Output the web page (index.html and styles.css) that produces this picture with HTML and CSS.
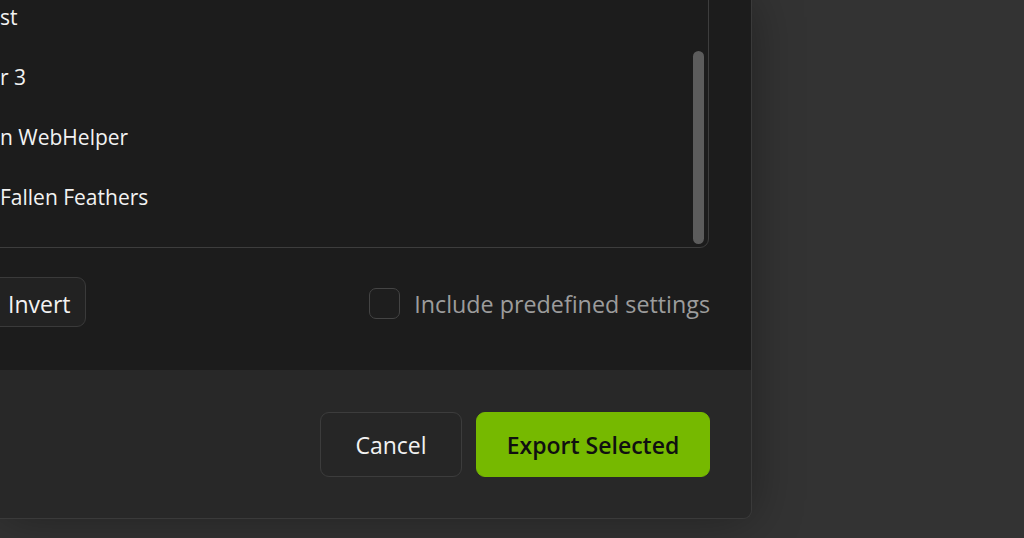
FILE: index.html
```html
<!DOCTYPE html>
<html>
<head>
  <title>Export Settings</title>
  <link rel="stylesheet" href="styles.css">
</head>
<body>
  <div class="dialog">
    <div class="dialog-body">
      <div class="app-list">
        <div class="app-item">st</div>
        <div class="app-item">r 3</div>
        <div class="app-item">n WebHelper</div>
        <div class="app-item">Fallen Feathers</div>
        <div class="scroll-thumb"></div>
      </div>
      <div class="options-row">
        <button class="btn btn-invert">Invert</button>
        <label class="check-option">
          <span class="check-box"></span>
          <span class="check-label">Include predefined settings</span>
        </label>
      </div>
    </div>
    <div class="dialog-footer">
      <button class="btn btn-cancel">Cancel</button>
      <button class="btn btn-primary">Export Selected</button>
    </div>
  </div>
</body>
</html>
```

FILE: styles.css
```css
html, body {
  height: 100%;
}

body {
  margin: 0;
  overflow: hidden;
  background-color: #333333;
  font-family: "Open Sans", "Noto Sans", sans-serif;
  font-weight: 500;
  color: #f2f2f2;
}

.dialog {
  width: 752px;
  height: 519px;
  box-sizing: border-box;
  display: flex;
  flex-direction: column;
  border-right: 1px solid #3a3a3a;
  border-bottom: 1px solid #3a3a3a;
  border-radius: 0 0 9px 0;
  overflow: hidden;
  box-shadow: 0 0 50px rgba(0, 0, 0, 0.35);
}

.dialog-body {
  height: 370px;
  background-color: #1c1c1c;
  padding-right: 42px;
  display: flex;
  flex-direction: column;
}

.app-list {
  position: relative;
  margin: -30px 0 0 -20px;
  padding: 16px 0 20px 20px;
  border: 1px solid #3d3d3d;
  border-radius: 9px;
}

.app-item {
  height: 60px;
  line-height: 60px;
  font-size: 21px;
  white-space: nowrap;
  margin-left: -1px;
}

.scroll-thumb {
  position: absolute;
  right: 4px;
  top: 80px;
  width: 11px;
  height: 193px;
  border-radius: 6px;
  background-color: #5c5c5c;
}

.options-row {
  margin-top: 29px;
  display: flex;
  align-items: center;
  justify-content: space-between;
}

.btn {
  font-family: inherit;
  font-weight: 500;
  font-size: 23px;
  padding-top: 3px;
  border-radius: 9px;
  cursor: pointer;
}

.btn-invert {
  margin-left: -30px;
  height: 50px;
  padding: 3px 14px 0 37px;
  background-color: #222222;
  border: 1px solid #3a3a3a;
  color: #f2f2f2;
}

.check-option {
  display: flex;
  align-items: center;
  gap: 14px;
  margin-right: -1px;
}

.check-box {
  width: 29px;
  height: 29px;
  margin-top: 2px;
  border: 1.5px solid #444444;
  border-radius: 7px;
  background-color: #1e1e1e;
}

.check-label {
  font-size: 23.3px;
  padding-top: 3px;
  color: #9c9c9c;
}

.dialog-footer {
  flex: 1;
  background-color: #282828;
  display: flex;
  align-items: center;
  justify-content: flex-end;
  gap: 14px;
  padding-right: 41px;
}

.btn-cancel {
  width: 142px;
  height: 65px;
  background-color: #262626;
  border: 1px solid #3c3c3c;
  color: #f2f2f2;
}

.btn-primary {
  width: 234px;
  height: 65px;
  font-weight: 600;
  background-color: #76b900;
  border: 1px solid #76b900;
  color: #101010;
}
```
